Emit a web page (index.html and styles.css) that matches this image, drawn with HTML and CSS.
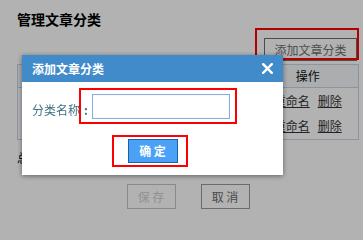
FILE: index.html
```html
<!DOCTYPE html>
<html lang="zh-CN">
<head>
<meta charset="utf-8">
<title>管理文章分类</title>
<link rel="stylesheet" href="styles.css">
</head>
<body>
<div class="page">
  <h1 class="title">管理文章分类</h1>
  <div class="toolbar">
    <div class="add-wrap">
      <button class="btn btn-add" type="button">添加文章分类</button>
      <span class="mark mark-add"></span>
    </div>
  </div>
  <table class="cat-table">
    <colgroup>
      <col class="col-no">
      <col class="col-name">
      <col class="col-op">
    </colgroup>
    <thead>
      <tr><th></th><th></th><th>操作</th></tr>
    </thead>
    <tbody>
      <tr><td></td><td></td><td class="ops"><a class="link" href="#">重命名</a><a class="link" href="#">删除</a></td></tr>
      <tr><td></td><td></td><td class="ops"><a class="link" href="#">重命名</a><a class="link" href="#">删除</a></td></tr>
    </tbody>
  </table>
  <p class="total">总计：2 个分类</p>
  <div class="actions">
    <button class="btn btn-act" type="button" disabled>保 存</button>
    <button class="btn btn-act btn-cancel" type="button">取 消</button>
  </div>
</div>

<div class="mask"></div>

<div class="dialog">
  <div class="dialog-head">
    <span class="dialog-title">添加文章分类</span>
    <span class="dialog-close" aria-label="关闭">
      <svg width="11" height="11" viewBox="0 0 11 11"><path d="M1.2 1.2 L9.8 9.8 M9.8 1.2 L1.2 9.8" stroke="#fff" stroke-width="2.4" stroke-linecap="square" fill="none"/></svg>
    </span>
  </div>
  <div class="dialog-body">
    <div class="field">
      <label class="field-label" for="catname">分类名称</label>
      <span class="field-colon">:</span>
      <input class="field-input" id="catname" type="text">
    </div>
    <div class="dialog-foot">
      <button class="btn btn-ok" type="button">确 定</button>
    </div>
  </div>
  <span class="mark mark-input"></span>
  <span class="mark mark-ok"></span>
</div>
</body>
</html>
```

FILE: styles.css
```css
* { box-sizing: border-box; }

html, body {
  margin: 0;
  padding: 0;
  background: #ffffff;
  font-family: "Noto Sans CJK SC", "Liberation Sans", sans-serif;
  font-size: 12px;
  color: #222;
  overflow: hidden;
}

.page {
  padding: 11px 4px 0 17px;
}

.title {
  margin: 0;
  font-size: 14px;
  line-height: 16px;
  font-weight: bold;
  color: #000;
}

.toolbar {
  display: flex;
  justify-content: flex-end;
  margin-top: 11px;
  padding-right: 2px;
}

.add-wrap {
  position: relative;
}

.btn {
  font-family: "Noto Sans CJK SC", "Liberation Sans", sans-serif;
  font-size: 12px;
  line-height: 14px;
  padding: 0;
  margin: 0;
  background: #ffffff;
  cursor: pointer;
}

.btn-add {
  display: block;
  width: 93px;
  height: 23px;
  border: 1px solid #6e6e6e;
  color: #707070;
}

.mark {
  position: absolute;
  border: 2px solid #ff0000;
  pointer-events: none;
}

.mark-add {
  left: -9px;
  top: -10px;
  width: 104px;
  height: 32px;
}

.cat-table {
  width: 100%;
  margin-top: 3px;
  border-collapse: collapse;
  border: 1px solid #c9d4e6;
  table-layout: fixed;
}

.col-no { width: 60px; }
.col-op { width: 101px; }

.cat-table th {
  height: 23px;
  padding: 0;
  font-weight: normal;
  font-size: 12px;
  line-height: 14px;
  color: #111;
  background: #f6f8fb;
  border-bottom: 1px solid #c9d4e6;
  text-align: center;
}

.cat-table td {
  height: 26px;
  padding: 0;
  font-size: 12px;
  line-height: 14px;
  text-align: center;
  color: #222;
}

.ops {
  white-space: nowrap;
}

.link {
  color: #333;
  text-decoration: underline;
}

.link + .link {
  margin-left: 8px;
}

.total {
  margin: 11px 0 0;
  font-size: 12px;
  line-height: 14px;
  color: #111;
}

.actions {
  display: flex;
  justify-content: center;
  gap: 25px;
  margin-top: 19px;
}

.btn-act {
  width: 49px;
  height: 25px;
  border: 1px solid #c4c4c4;
  color: #d0d0d0;
  background: #ffffff;
}

.btn-cancel {
  border-color: #9a9a9a;
  color: #6a6a6a;
}

.mask {
  position: fixed;
  inset: 0;
  background: rgba(0, 0, 0, 0.3);
}

.dialog {
  position: fixed;
  left: 22px;
  top: 55px;
  width: 261px;
  height: 120px;
  background: #ffffff;
  box-shadow: 0 1px 5px rgba(0, 0, 0, 0.45);
}

.dialog-head {
  display: flex;
  align-items: center;
  justify-content: space-between;
  height: 27px;
  padding: 0 10px 0 10px;
  background: #428bca;
}

.dialog-title {
  color: #ffffff;
  font-size: 12px;
  font-weight: bold;
  line-height: 14px;
}

.dialog-close {
  display: flex;
  width: 11px;
  height: 11px;
}

.dialog-body {
  padding: 12px 0 0 10px;
}

.field {
  display: flex;
  align-items: center;
}

.field-label {
  font-size: 12px;
  line-height: 14px;
  color: #3f7283;
  padding-top: 6px;
  white-space: nowrap;
}

.field-colon {
  width: 12px;
  flex: none;
  text-align: center;
  font-size: 12px;
  line-height: 14px;
  font-weight: bold;
  color: #3f7283;
  padding-top: 6px;
}

.field-input {
  width: 138px;
  height: 25px;
  margin: 0;
  flex: none;
  border: 1px solid #88ade3;
  box-shadow: inset 0 0 1px #b5cdf0;
  outline: none;
  padding: 0 4px;
  font-size: 12px;
}

.dialog-foot {
  display: flex;
  justify-content: center;
  margin-top: 20px;
  margin-left: -10px;
}

.btn-ok {
  width: 50px;
  height: 24px;
  background: #4aa1f5;
  border: 1px solid #1f5fa6;
  color: #ffffff;
  font-weight: bold;
}

.mark-input {
  left: 57px;
  top: 33px;
  width: 158px;
  height: 36px;
}

.mark-ok {
  left: 90px;
  top: 80px;
  width: 76px;
  height: 32px;
}
```
